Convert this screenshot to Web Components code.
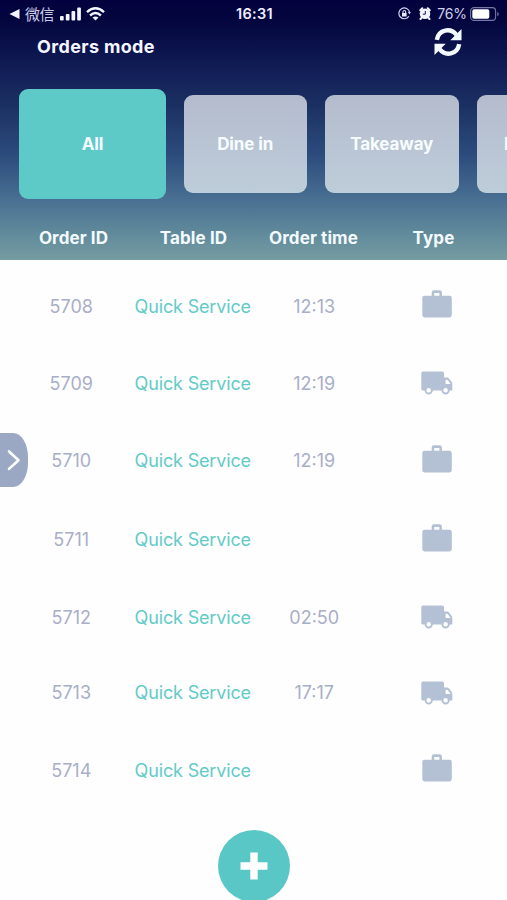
<!DOCTYPE html>
<html lang="en">
<head>
<meta charset="utf-8">
<title>Orders mode</title>
<style>
html,body{margin:0;padding:0}
body{width:507px;height:900px;overflow:hidden;background:#fefefe;font-family:Inter,"Liberation Sans","Noto Sans CJK SC",sans-serif}
</style>
</head>
<body>
<orders-app></orders-app>
<script>
const define = (name, html) => customElements.define(name, class extends HTMLElement {
  constructor() {
    super();
    this.attachShadow({mode: 'open'});
  }
  connectedCallback() {
    this.shadowRoot.innerHTML = typeof html === 'function' ? html(this) : html;
  }
});

define('status-bar', `
<style>
:host{display:grid;grid-template-columns:1fr auto 1fr;align-items:center;height:27px;color:#e9ecff;font-size:14px;line-height:17px;box-sizing:border-box;padding:0 7px 0 9px}
div{display:flex;align-items:center}
svg{display:block;flex:none}
.cn{font:15px/18px "Noto Sans CJK SC",sans-serif;color:#c9cce6;margin-left:5px;letter-spacing:-.5px}
.time{font-weight:600;font-size:14.500px;letter-spacing:.35px;color:#edf0ff}
.right{justify-content:flex-end}
.pct{font-size:14px;letter-spacing:-.1px;margin:0 3px 0 6px;color:#cdd0ea}
</style>
<div><svg width="11" height="10" viewBox="0 0 11 10"><path d="M10.5 0v10L.5 5z" fill="#f2f3ff"/></svg><span class="cn">微信</span>
<svg style="margin-left:6px" width="21" height="14" viewBox="0 0 21 14" fill="#f4f6ff"><rect y="9" width="3.7" height="4.5" rx="1"/><rect x="5.8" y="7" width="3.7" height="6.5" rx="1"/><rect x="11.5" y="4" width="3.7" height="9.5" rx="1"/><rect x="17.2" y=".5" width="3.7" height="13" rx="1"/></svg>
<svg style="margin-left:5px" width="19" height="14" viewBox="0 0 19 14" fill="none" stroke="#f4f6ff" stroke-width="2.4"><path d="M1 5.1Q9.500-2.400 18 5.100M4.100 8.500Q9.500 3.700 14.900 8.500"/><path d="M9.500 13.600L6.500 10.600Q9.500 8.200 12.500 10.600z" fill="#f4f6ff" stroke="none"/></svg></div>
<span class="time">16:31</span>
<div class="right">
<svg width="13" height="13" viewBox="0 0 13 13" fill="none" stroke="#cfd3ee" stroke-width="1.200"><path d="M10.900 9.200A5.400 5.400 0 1 1 11.600 5.300"/><path d="M9.800 4.900h3.100l-1.400 2.700z" fill="#cfd3ee" stroke="none"/><rect x="4" y="6" width="4.600" height="3.500" fill="#e6e9ff" stroke="none"/><path d="M5 6V4.800a1.300 1.300 0 0 1 2.600 0V6"/></svg>
<svg style="margin-left:8px" width="12" height="13" viewBox="0 0 12 13"><circle cx="6" cy="6.800" r="5.300" fill="#f2f4ff"/><path d="M1.300 3.300L3.300 1.300M10.700 3.300L8.700 1.300M2.700 10.600L1.500 12M9.300 10.600l1.200 1.400" stroke="#f2f4ff" stroke-width="2" stroke-linecap="round"/><path d="M6.300 4v3.200H3.800" fill="none" stroke="#15164d" stroke-width="1"/></svg>
<span class="pct">76%</span>
<svg width="30" height="14" viewBox="0 0 30 14"><rect x=".6" y=".6" width="25" height="12.800" rx="3.500" fill="none" stroke="#7779a5" stroke-width="1.100"/><rect x="2.300" y="2.300" width="17" height="9.400" rx="1.800" fill="#fff"/><path d="M27.300 4.700q3 2.300 0 4.600z" fill="#7779a5"/></svg>
</div>`);

define('sync-icon', `
<style>:host{display:block}svg{display:block}</style>
<svg width="28" height="28" viewBox="0 0 28 28"><g fill="none" stroke="#f4fbff" stroke-width="4.400"><path d="M2.800 11.800C4.700 1.200 16.500-.5 22.500 6.800"/><path d="M25.200 16.200C23.300 26.800 11.500 28.500 5.500 21.200"/></g><path d="M27.500 1v11.200H16.300zM.5 27V15.800h11.200z" fill="#f4fbff"/></svg>`);

define('mode-tab', `
<style>
:host{display:flex;align-items:center;justify-content:center;flex:none;box-sizing:border-box;height:98px;border-radius:9px;background:linear-gradient(#b4bbcd,#becdda);color:#f7fcff;font-size:17px;font-weight:650;letter-spacing:-.1px}
:host([active]){height:110px;background:#5ecac8}
</style><slot></slot>`);

define('column-titles', `
<style>
:host{display:grid;grid-template-columns:repeat(4,120px);padding-left:13.500px;height:44px;align-items:center;text-align:center;color:#f4fbff;font-weight:650;font-size:17px;letter-spacing:.1px}
</style><span>Order ID</span><span>Table ID</span><span>Order time</span><span>Type</span>`);

const icons = {
  bag: '<svg width="30" height="28" viewBox="0 0 30 28"><path fill-rule="evenodd" d="M9.700 5.800V2.500Q9.700.3 12 .3h5.700q2.200 0 2.200 2.200v3.300h7.600q2.300 0 2.300 2.400v16.900q0 2.300-2.300 2.300h-25Q.3 27.400.3 25.100V8.200q0-2.400 2.300-2.400zM12.200 5.800h5.200V3.100h-5.200z"/></svg>',
  truck: '<svg width="32" height="24" viewBox="0 0 32 24"><path fill-rule="evenodd" d="M2.200.5h19q1.900 0 1.900 1.900v4h2.800q1.300 0 2.100 1l2.500 3.300q.8 1 .8 2.300v6.400H1.600Q.3 19.400.3 18.100V2.400Q.3.5 2.200.5zM24.600 8.800v4.100h5l-2.500-3.400q-.6-.7-1.300-.7z"/><circle cx="7.700" cy="19.300" r="3.200" fill="#fefefe" stroke="#b4c1d5" stroke-width="1.900"/><circle cx="24.600" cy="19.300" r="3.200" fill="#fefefe" stroke="#b4c1d5" stroke-width="1.900"/></svg>'
};
define('type-icon', el => `<style>:host{display:flex;justify-content:center}svg{display:block;fill:#b4c1d5}</style>${icons[el.getAttribute('kind')]}`);

define('order-row', el => `
<style>
:host{display:grid;grid-template-columns:121.500px 121.500px 121.500px 123px;padding-left:10.500px;align-items:center;text-align:center;color:#a9aec8;font-size:18px;line-height:24px}
span{padding-top:1px}
.service{color:#63cbc7;letter-spacing:-.16px}
type-icon{padding:0 0 4px 1.500px}
type-icon[kind=truck]{padding-bottom:0}
</style>
<span>${el.getAttribute('order')}</span><span class="service">Quick Service</span><span>${el.getAttribute('time') || ''}</span><type-icon kind="${el.getAttribute('kind')}"></type-icon>`);

define('side-handle', `
<style>:host{display:flex;align-items:center;width:28px;height:54px;background:#9aa8c3;border-radius:0 15px 15px 0 / 0 24px 24px 0}svg{margin-left:7px}</style>
<svg width="14" height="22" viewBox="0 0 14 22"><path d="M2 2.500l9.500 8.700L2 19.900" fill="none" stroke="#fff" stroke-width="2.600" stroke-linecap="round" stroke-linejoin="round"/></svg>`);

define('add-button', `
<style>:host{display:flex;align-items:center;justify-content:center;width:72px;height:72px;border-radius:50%;background:#5ac7c7}</style>
<svg width="28" height="28" viewBox="0 0 28 28"><path d="M10.300.5h7.400v9.800h9.800v7.400h-9.800v9.800h-7.400v-9.800H.5v-7.400h9.800z" fill="#fff"/></svg>`);

const orders = [
  [5708,'12:13','bag',78],[5709,'12:19','truck',76],[5710,'12:19','bag',79],[5711,'','bag',79],
  [5712,'02:50','truck',76],[5713,'17:17','truck',75],[5714,'','bag',80]
];
define('orders-app', `
<style>
:host{display:flex;flex-direction:column;position:relative;height:900px;overflow:hidden}
header{height:260px;flex:none;background:linear-gradient(#02013e 0,#04063f 22px,#14215a 77px,#1b3062 105px,#2c4c7d 155px,#486e91 198px,#628b9c 235px,#769da1 260px)}
.title{display:flex;align-items:center;justify-content:space-between;height:38px;padding:0 45px 0 37px;color:#f4f7ff}
h1{font-size:18px;font-weight:650;margin:0;letter-spacing:.35px}
sync-icon{margin-top:-9px}
nav{display:flex;align-items:center;height:110px;margin-top:24px;padding-left:19px;gap:18px;overflow:hidden}
nav :nth-child(1){width:147px}nav :nth-child(2){width:122.500px}nav :nth-child(3){width:134.500px}nav :nth-child(4){width:123px;justify-content:flex-start;padding-left:27px}
column-titles{margin-top:17px}
main{padding-top:7px;display:flex;flex-direction:column}
side-handle{position:absolute;left:0;top:432.500px}
add-button{align-self:center;margin-top:20px;flex:none}
</style>
<header>
<status-bar></status-bar>
<div class="title"><h1>Orders mode</h1><sync-icon></sync-icon></div>
<nav><mode-tab active>All</mode-tab><mode-tab>Dine in</mode-tab><mode-tab>Takeaway</mode-tab><mode-tab>Delivery</mode-tab></nav>
<column-titles></column-titles>
</header>
<main>${orders.map(([id,time,kind,h]) => `<order-row order="${id}" time="${time}" kind="${kind}" style="height:${h}px"></order-row>`).join('')}</main>
<add-button></add-button>
<side-handle></side-handle>`);
</script>
</body>
</html>
